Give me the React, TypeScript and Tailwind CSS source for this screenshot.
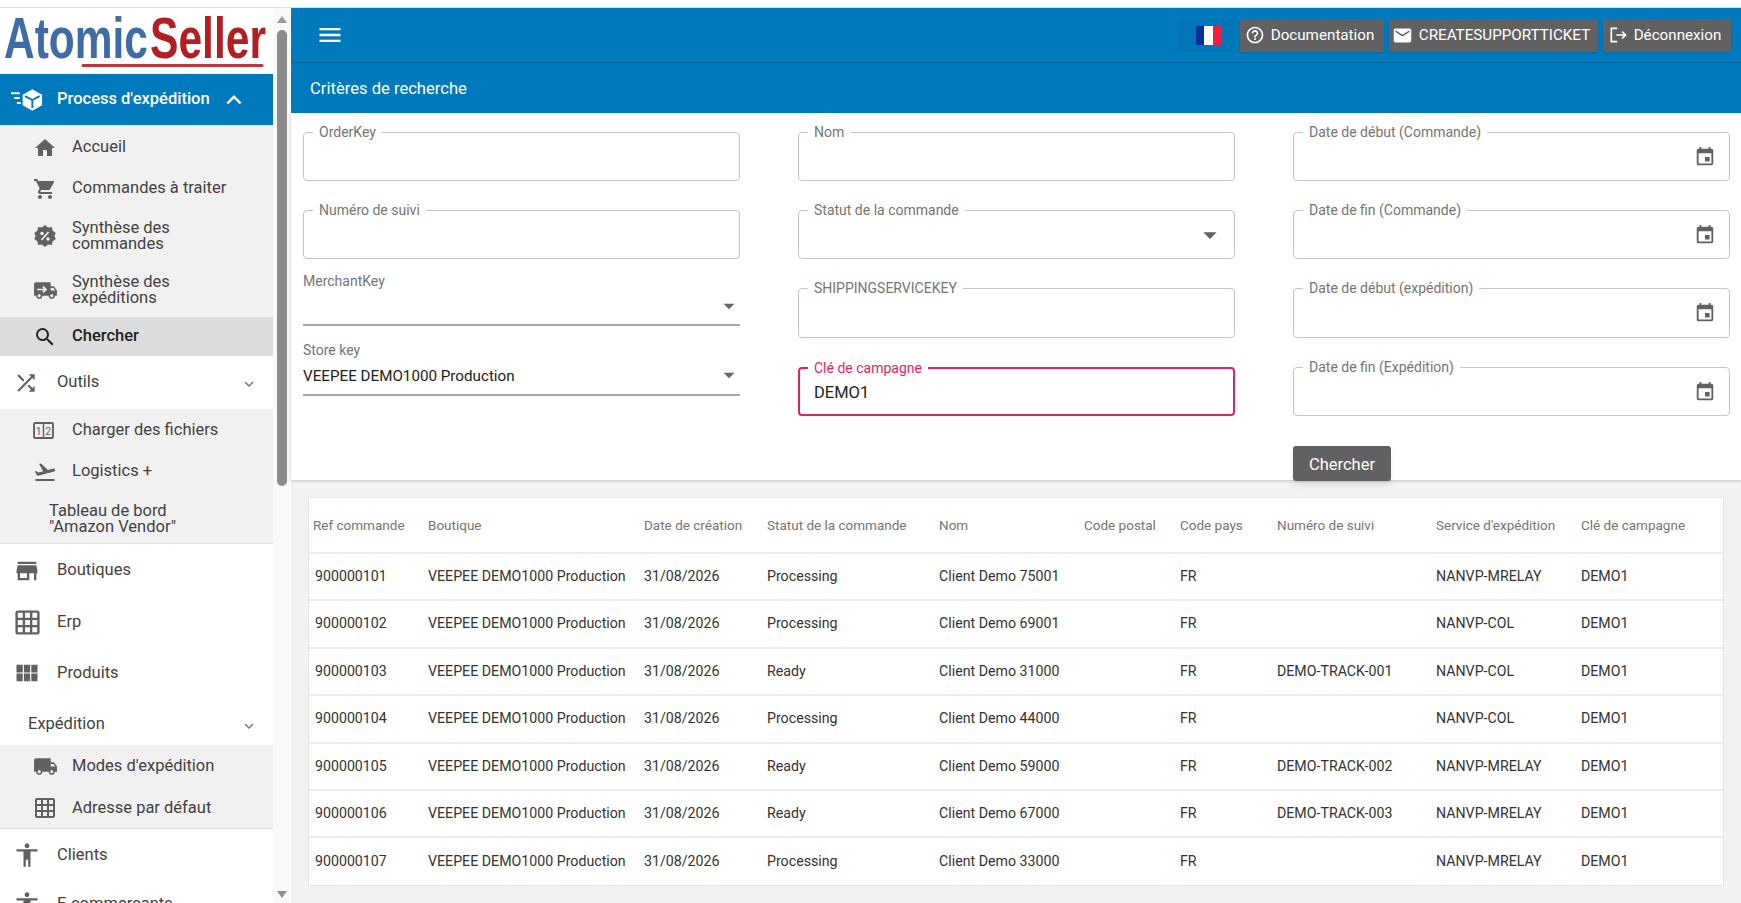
import React from 'react';
import {
  MdHome,
  MdShoppingCart,
  MdSearch,
  MdShuffle,
  MdFlightTakeoff,
  MdStore,
  MdGridOn,
  MdViewModule,
  MdLocalShipping,
  MdAccessibility,
  MdExpandMore,
  MdKeyboardArrowUp,
  MdMenu,
  MdHelpOutline,
  MdEmail,
  MdArrowDropDown,
  MdEvent,
} from 'react-icons/md';

const Logo = () => (
  <svg viewBox="0 0 273 66" className="w-[273px] h-[66px]">
    <text x="4" y="50" fontSize="57" fontWeight="700" fontFamily="'Liberation Sans', sans-serif" fill="#3f6ca6" textLength="144" lengthAdjust="spacingAndGlyphs">
      Atomic
    </text>
    <text x="150" y="50" fontSize="57" fontWeight="700" fontFamily="'Liberation Sans', sans-serif" fill="#b11f23" textLength="116" lengthAdjust="spacingAndGlyphs">
      Seller
    </text>
    <path d="M83 57.5h179" stroke="#b8353d" strokeWidth="3" strokeLinecap="round" />
  </svg>
);

const ProcessIcon = () => (
  <svg viewBox="0 0 34 24" className="w-[33px] h-[24px]" fill="none">
    <path d="M0 5h9M3 10h6M6 15h4" stroke="#fff" strokeWidth="2" />
    <path d="M22 1l10 5.5v11L22 23l-10-5.5v-11z" fill="#fff" />
    <path d="M14.5 8l7.5 4 7.5-4M22 12v8.5" stroke="#0079bd" strokeWidth="2" />
  </svg>
);

const DiscountIcon = () => (
  <svg viewBox="0 0 24 24" className="w-[24px] h-[24px]">
    <path
      d="M12 1l3 2.4 3.8-.3.9 3.7 3.1 2.2-1.4 3 1.4 3-3.1 2.2-.9 3.7-3.8-.3L12 23l-3-2.4-3.8.3-.9-3.7-3.1-2.2 1.4-3-1.4-3 3.1-2.2.9-3.7 3.8.3z"
      fill="#616161"
    />
    <circle cx="9" cy="9.5" r="1.7" fill="#f1f1f1" />
    <circle cx="15" cy="15" r="1.7" fill="#f1f1f1" />
    <path d="M15.5 8l-7 8" stroke="#f1f1f1" strokeWidth="1.6" />
  </svg>
);

const FastTruckIcon = () => (
  <svg viewBox="0 0 24 24" className="w-[25px] h-[25px]">
    <path
      d="M20 8h-3V4H3c-1.1 0-2 .9-2 2v11h2c0 1.66 1.34 3 3 3s3-1.34 3-3h6c0 1.66 1.34 3 3 3s3-1.34 3-3h2v-5l-3-4zM6 18.5c-.83 0-1.5-.67-1.5-1.5s.67-1.5 1.5-1.5 1.5.67 1.5 1.5-.67 1.5-1.5 1.5zm13.5-9l1.96 2.5H17V9.5h2.5zm-1.5 9c-.83 0-1.5-.67-1.5-1.5s.67-1.5 1.5-1.5 1.5.67 1.5 1.5-.67 1.5-1.5 1.5z"
      fill="#616161"
    />
    <path d="M4 11h8M9.5 8.2l3 2.8-3 2.8" stroke="#f1f1f1" strokeWidth="1.6" fill="none" />
  </svg>
);

const NumbersIcon = () => (
  <svg viewBox="0 0 22 18" className="w-[21px] h-[17px]">
    <rect x="1" y="1" width="20" height="16" rx="1" fill="none" stroke="#616161" strokeWidth="2" />
    <path d="M11 1v16" stroke="#616161" strokeWidth="1.5" />
    <text x="6" y="13.5" textAnchor="middle" fontSize="11" fill="#616161" fontFamily="Roboto, sans-serif">1</text>
    <text x="16" y="13.5" textAnchor="middle" fontSize="11" fill="#616161" fontFamily="Roboto, sans-serif">2</text>
  </svg>
);

const LogoutIcon = () => (
  <svg viewBox="0 0 24 24" className="w-[20px] h-[20px]" fill="none" stroke="#fff" strokeWidth="2">
    <path d="M11 4H4v16h7M10 12h11M17 8l4 4-4 4" />
  </svg>
);

const SubItem = ({ icon, label, bold, h }: { icon?: React.ReactNode; label: string; bold?: boolean; h: string }) => (
  <div className={`flex items-center pl-[33px] ${h} ${bold ? 'bg-[#dcdcdc] font-medium text-[#222]' : ''}`}>
    <span className="w-[39px] flex justify-start text-[#616161]">{icon}</span>
    <span className="leading-[16.5px] whitespace-pre-line">{label}</span>
  </div>
);

const NavRow = ({ icon, label, h, more }: { icon?: React.ReactNode; label: string; h: string; more?: boolean }) => (
  <div className={`flex items-center pl-[13px] ${h}`}>
    <span className="w-[44px] flex text-[#616161]">{icon}</span>
    <span>{label}</span>
    {more && <MdExpandMore className="ml-auto mr-[15px] mt-[3px] text-[#777]" size={18} />}
  </div>
);

const Sidebar = () => (
  <aside className="w-[273px] shrink-0 overflow-hidden bg-white text-[16.5px] text-[#424242]">
    <Logo />
    <div className="h-[51px] bg-[#0079bd] flex items-center pl-[11px] text-white font-medium">
      <ProcessIcon />
      <span className="ml-[13px]">Process d'expédition</span>
      <MdKeyboardArrowUp size={30} className="ml-[9px]" />
    </div>
    <div className="bg-[#f1f1f1] pt-[2px]">
      <SubItem h="h-[41px]" icon={<MdHome size={24} />} label="Accueil" />
      <SubItem h="h-[41px]" icon={<MdShoppingCart size={24} />} label="Commandes à traiter" />
      <SubItem h="h-[54px]" icon={<DiscountIcon />} label={'Synthèse des\ncommandes'} />
      <SubItem h="h-[54px]" icon={<FastTruckIcon />} label={'Synthèse des\nexpéditions'} />
      <SubItem h="h-[39px]" bold icon={<MdSearch size={24} className="text-[#222]" />} label="Chercher" />
    </div>
    <NavRow h="h-[53px]" icon={<MdShuffle size={26} />} label="Outils" more />
    <div className="bg-[#f1f1f1] border-b border-[#e0e0e0] h-[135px]">
      <SubItem h="h-[42px]" icon={<NumbersIcon />} label="Charger des fichiers" />
      <SubItem h="h-[41px]" icon={<MdFlightTakeoff size={24} />} label="Logistics +" />
      <div className="pl-[49px] pt-[11px] leading-[16px]">
        Tableau de bord
        <br />
        "Amazon Vendor"
      </div>
    </div>
    <NavRow h="h-[53px]" icon={<MdStore size={28} />} label="Boutiques" />
    <NavRow h="h-[50px]" icon={<MdGridOn size={29} />} label="Erp" />
    <NavRow h="h-[52px]" icon={<MdViewModule size={28} />} label="Produits" />
    <div className="h-[46px] flex items-center pl-[28px] pt-[4px]">
      <span>Expédition</span>
      <MdExpandMore className="ml-auto mr-[15px] mt-[3px] text-[#777]" size={18} />
    </div>
    <div className="bg-[#f1f1f1] border-b border-[#e0e0e0] h-[84px]">
      <SubItem h="h-[42px]" icon={<MdLocalShipping size={25} />} label="Modes d'expédition" />
      <SubItem h="h-[42px]" icon={<MdGridOn size={24} />} label="Adresse par défaut" />
    </div>
    <NavRow h="h-[52px]" icon={<MdAccessibility size={28} />} label="Clients" />
    <NavRow h="h-[46px]" icon={<MdAccessibility size={28} />} label="E-commerçants" />
  </aside>
);

const SideScrollbar = () => (
  <div className="w-[18px] shrink-0 bg-[#f9f9f9] flex flex-col items-center">
    <div className="mt-[8px] w-0 h-0 border-x-[5px] border-x-transparent border-b-[7px] border-b-[#9a9a9a]" />
    <div className="mt-[7px] w-[10px] h-[456px] rounded-full bg-[#8b8b8b]" />
    <div className="mt-auto mb-[5px] w-0 h-0 border-x-[5px] border-x-transparent border-t-[7px] border-t-[#8f8f8f]" />
  </div>
);

const TopButton = ({ icon, label, w }: { icon: React.ReactNode; label: string; w: string }) => (
  <div className={`h-[33px] ${w} bg-[#616161] rounded-[2px] flex items-center justify-center gap-[6px] pr-[5px] text-white text-[15.2px] shadow-sm`}>
    {icon}
    <span>{label}</span>
  </div>
);

const OutlinedField = ({
  label,
  value,
  right,
  focused,
  tall,
}: {
  label: string;
  value?: string;
  right?: React.ReactNode;
  focused?: boolean;
  tall?: boolean;
}) => (
  <div
    className={`relative ${tall ? 'h-[50px]' : 'h-[49px]'} rounded-[4px] flex items-center ${
      focused ? 'border-2 border-[#e91e63] pt-[3px] px-[14px]' : 'border border-[#c4c4c4] px-[16px]'
    }`}
  >
    <span
      className={`absolute top-[-11px] bg-white px-[6px] text-[14px] leading-[20px] ${
        focused ? 'left-[8px] text-[#e91e63]' : 'left-[9px] text-[#757575]'
      }`}
    >
      {label}
    </span>
    <span className="text-[16.5px] text-[#222]">{value}</span>
    {right && <span className="ml-auto flex text-[#616161]">{right}</span>}
  </div>
);

const StandardSelect = ({ label, value, className }: { label: string; value?: string; className: string }) => (
  <div className={`relative border-b-2 border-[#a8a8a8] ${className}`}>
    <span className="block text-[14px] leading-[20px] text-[#757575]">{label}</span>
    <div className="flex items-center h-[28px] mt-[1px] mb-[4px] text-[15.2px] text-[#222]">
      <span className="mt-[2px]">{value}</span>
      <MdArrowDropDown size={26} className="ml-auto mr-[-2px] text-[#666]" />
    </div>
  </div>
);

const dateIcon = <MdEvent size={22} className="mr-[-3px]" />;

const columns = ['Ref commande', 'Boutique', 'Date de création', 'Statut de la commande', 'Nom', 'Code postal', 'Code pays', 'Numéro de suivi', "Service d'expédition", 'Clé de campagne'];

const rows = [
  ['900000101', 'Processing', 'Client Demo 75001', '', 'NANVP-MRELAY'],
  ['900000102', 'Processing', 'Client Demo 69001', '', 'NANVP-COL'],
  ['900000103', 'Ready', 'Client Demo 31000', 'DEMO-TRACK-001', 'NANVP-COL'],
  ['900000104', 'Processing', 'Client Demo 44000', '', 'NANVP-COL'],
  ['900000105', 'Ready', 'Client Demo 59000', 'DEMO-TRACK-002', 'NANVP-MRELAY'],
  ['900000106', 'Ready', 'Client Demo 67000', 'DEMO-TRACK-003', 'NANVP-MRELAY'],
  ['900000107', 'Processing', 'Client Demo 33000', '', 'NANVP-MRELAY'],
];

const ResultTable = () => (
  <div className="mx-[17px] mt-[17px] bg-white border border-[#e6e6e6]">
    <table className="w-full table-fixed border-collapse text-[14.2px] text-[#333]">
      <colgroup>
        <col className="w-[115px]" />
        <col className="w-[216px]" />
        <col className="w-[123px]" />
        <col className="w-[172px]" />
        <col className="w-[145px]" />
        <col className="w-[96px]" />
        <col className="w-[97px]" />
        <col className="w-[159px]" />
        <col className="w-[145px]" />
        <col />
      </colgroup>
      <thead>
        <tr className="h-[55px] border-b-2 border-[#ececec]">
          {columns.map((c) => (
            <th key={c} className="pl-[4px] text-left font-normal text-[13.5px] text-[#757575] whitespace-nowrap">
              {c}
            </th>
          ))}
        </tr>
      </thead>
      <tbody>
        {rows.map((r) => (
          <tr key={r[0]} className="h-[47.4px] border-b-2 border-[#ececec] last:border-b-0">
            <td className="pl-[6px]">{r[0]}</td>
            <td className="pl-[4px] whitespace-nowrap">VEEPEE DEMO1000 Production</td>
            <td className="pl-[4px]">31/08/2026</td>
            <td className="pl-[4px]">{r[1]}</td>
            <td className="pl-[4px] whitespace-nowrap">{r[2]}</td>
            <td className="pl-[4px]" />
            <td className="pl-[4px]">FR</td>
            <td className="pl-[4px] whitespace-nowrap">{r[3]}</td>
            <td className="pl-[4px]">{r[4]}</td>
            <td className="pl-[4px]">DEMO1</td>
          </tr>
        ))}
      </tbody>
    </table>
  </div>
);

export default function App() {
  return (
    <div className="h-[903px] overflow-hidden bg-white font-['Roboto',sans-serif] flex flex-col">
      <div className="h-[8px] shrink-0 bg-white border-b border-[#dedede]" />
      <div className="flex flex-1 min-h-0">
        <Sidebar />
        <SideScrollbar />
        <main className="flex-1 min-w-0 bg-[#f2f2f2]">
          <header className="h-[55px] bg-[#0079bd] border-b border-[#00639b] flex items-center pl-[25px] pr-[10px] text-white">
            <MdMenu size={28} />
            <div className="ml-auto flex items-center gap-[5px]">
              <div className="w-[57px] h-[33px] flex items-center justify-center bg-[#0076b8] rounded-[2px]">
                <div className="flex w-[26px] h-[19px] ml-[4px]">
                  <span className="flex-1 bg-[#0a2f9c]" />
                  <span className="flex-1 bg-white" />
                  <span className="flex-1 bg-[#ee1c3d]" />
                </div>
              </div>
              <TopButton w="w-[144px]" icon={<MdHelpOutline size={20} />} label="Documentation" />
              <TopButton w="w-[209px]" icon={<MdEmail size={21} />} label="CREATESUPPORTTICKET" />
              <TopButton w="w-[128px]" icon={<LogoutIcon />} label="Déconnexion" />
            </div>
          </header>
          <div className="h-[50px] bg-[#0079bd] flex items-center pl-[19px] pt-[2px] text-white text-[16.6px]">Critères de recherche</div>
          <section className="h-[367px] bg-white shadow-[0_1px_3px_rgba(0,0,0,0.2)] pl-[12px] pr-[11px] pt-[19px] grid grid-cols-3 gap-x-[58px]">
            <div className="flex flex-col">
              <OutlinedField label="OrderKey" />
              <div className="mt-[29px]">
                <OutlinedField label="Numéro de suivi" />
              </div>
              <StandardSelect className="mt-[12px]" label="MerchantKey" />
              <StandardSelect className="mt-[14px] pb-[1px]" label="Store key" value="VEEPEE DEMO1000 Production" />
            </div>
            <div className="flex flex-col gap-[29px]">
              <OutlinedField label="Nom" />
              <OutlinedField label="Statut de la commande" right={<MdArrowDropDown size={32} className="mr-[-8px]" />} />
              <OutlinedField tall label="SHIPPINGSERVICEKEY" />
              <OutlinedField focused label="Clé de campagne" value="DEMO1" />
            </div>
            <div className="flex flex-col">
              <div className="flex flex-col gap-[29px]">
                <OutlinedField label="Date de début (Commande)" right={dateIcon} />
                <OutlinedField label="Date de fin (Commande)" right={dateIcon} />
                <OutlinedField tall label="Date de début (expédition)" right={dateIcon} />
                <OutlinedField label="Date de fin (Expédition)" right={dateIcon} />
              </div>
              <button className="mt-[30px] w-[98px] h-[35px] pt-[3px] bg-[#616161] rounded-[3px] text-white text-[16.5px] shadow-md">Chercher</button>
            </div>
          </section>
          <ResultTable />
        </main>
      </div>
    </div>
  );
}
